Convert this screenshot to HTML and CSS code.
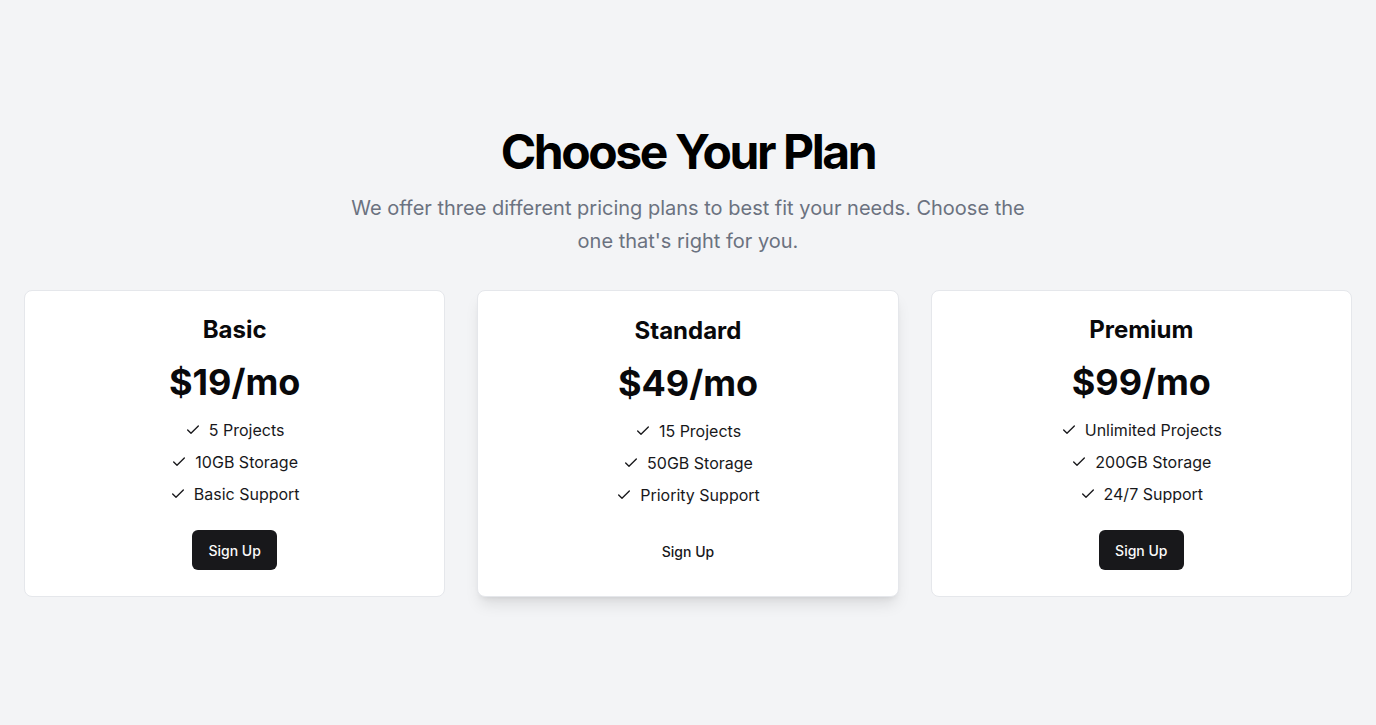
FILE: index.html
```html
<!DOCTYPE html>
<html lang="en">
<head>
<meta charset="utf-8">
<title>Choose Your Plan</title>
<link rel="stylesheet" href="styles.css">
</head>
<body>
<section class="pricing">
  <header class="intro">
    <h1 class="title">Choose Your Plan</h1>
    <p class="subtitle">We offer three different pricing plans to best fit your needs. Choose the one that's right for you.</p>
  </header>
  <div class="plans">
    <div class="card">
      <h2 class="plan-name">Basic</h2>
      <div class="price">$19/mo</div>
      <ul class="features">
        <li><svg class="check" viewBox="0 0 24 24"><path d="M20 6 9 17l-5-5"/></svg>5 Projects</li>
        <li><svg class="check" viewBox="0 0 24 24"><path d="M20 6 9 17l-5-5"/></svg>10GB Storage</li>
        <li><svg class="check" viewBox="0 0 24 24"><path d="M20 6 9 17l-5-5"/></svg>Basic Support</li>
      </ul>
      <button class="btn btn-dark">Sign Up</button>
    </div>
    <div class="card card-featured">
      <h2 class="plan-name">Standard</h2>
      <div class="price">$49/mo</div>
      <ul class="features">
        <li><svg class="check" viewBox="0 0 24 24"><path d="M20 6 9 17l-5-5"/></svg>15 Projects</li>
        <li><svg class="check" viewBox="0 0 24 24"><path d="M20 6 9 17l-5-5"/></svg>50GB Storage</li>
        <li><svg class="check" viewBox="0 0 24 24"><path d="M20 6 9 17l-5-5"/></svg>Priority Support</li>
      </ul>
      <button class="btn btn-ghost">Sign Up</button>
    </div>
    <div class="card">
      <h2 class="plan-name">Premium</h2>
      <div class="price">$99/mo</div>
      <ul class="features">
        <li><svg class="check" viewBox="0 0 24 24"><path d="M20 6 9 17l-5-5"/></svg>Unlimited Projects</li>
        <li><svg class="check" viewBox="0 0 24 24"><path d="M20 6 9 17l-5-5"/></svg>200GB Storage</li>
        <li><svg class="check" viewBox="0 0 24 24"><path d="M20 6 9 17l-5-5"/></svg>24/7 Support</li>
      </ul>
      <button class="btn btn-dark">Sign Up</button>
    </div>
  </div>
</section>
</body>
</html>
```
FILE: styles.css
```css
* { box-sizing: border-box; }
html, body { margin: 0; padding: 0; }
body {
  background: #f3f4f6;
  font-family: Inter, "Noto Sans", sans-serif;
  color: #09090b;
  min-height: 725px;
}
.pricing {
  padding: 128px 24px 48px;
  display: flex;
  flex-direction: column;
  align-items: center;
}
.intro {
  text-align: center;
  display: flex;
  flex-direction: column;
  align-items: center;
}
.title {
  margin: 0;
  font-size: 48px;
  line-height: 48px;
  font-weight: 700;
  letter-spacing: -0.05em;
  color: #000;
}
.subtitle {
  margin: 16px 0 0;
  max-width: 700px;
  font-size: 20px;
  line-height: 33px;
  color: #6b7280;
}
.plans {
  margin-top: 32px;
  width: 100%;
  display: grid;
  grid-template-columns: repeat(3, 1fr);
  gap: 32px;
}
.card {
  background: #fff;
  border: 1px solid #e5e7eb;
  border-radius: 8px;
  padding: 23px 24px 25px;
  display: flex;
  flex-direction: column;
  align-items: center;
  text-align: center;
}
.card-featured {
  padding-top: 24px;
  box-shadow: 0 10px 15px -3px rgba(0,0,0,0.1), 0 4px 6px -4px rgba(0,0,0,0.1);
}
.plan-name {
  margin: 0;
  font-size: 24px;
  line-height: 32px;
  font-weight: 700;
}
.price {
  margin-top: 16px;
  font-size: 36px;
  line-height: 40px;
  font-weight: 700;
}
.features {
  list-style: none;
  margin: 16px 0 0;
  padding: 0;
  display: flex;
  flex-direction: column;
  gap: 8px;
  align-items: center;
}
.features li {
  display: flex;
  align-items: center;
  gap: 8px;
  font-size: 16px;
  line-height: 24px;
  color: #18181b;
}
.check {
  width: 16px;
  height: 16px;
  fill: none;
  stroke: #18181b;
  stroke-width: 2;
  stroke-linecap: round;
  stroke-linejoin: round;
}
.btn {
  margin-top: 24px;
  height: 40px;
  padding: 0 16px;
  border-radius: 6px;
  border: none;
  font-family: inherit;
  font-size: 14px;
  font-weight: 500;
}
.btn-dark {
  background: #18181b;
  color: #fafafa;
}
.btn-ghost {
  background: transparent;
  color: #18181b;
}
```
